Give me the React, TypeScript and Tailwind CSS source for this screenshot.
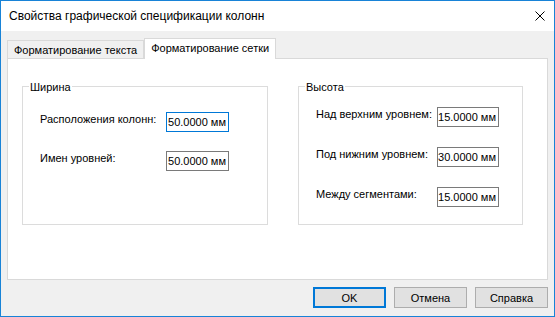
const Field = ({ value, focused, width }: { value: string; focused?: boolean; width: string }) => (
  <div
    className={`${width} h-[20px] flex items-center justify-end pr-[2px] bg-white border whitespace-nowrap ${
      focused ? 'border-[#0078d7]' : 'border-[#7a7a7a]'
    } leading-[18px]`}
  >
    {value}
  </div>
);

const Row = ({ label, labelWidth, children }: { label: string; labelWidth: string; children: React.ReactNode }) => (
  <div className="flex items-start">
    <div className={`${labelWidth} leading-[14px] whitespace-nowrap`}>{label}</div>
    {children}
  </div>
);

const App = () => {
  return (
    <div className="w-[555px] h-[317px] border border-[#1883d7] bg-[#f0f0f0] flex flex-col text-[11px] text-black font-['Liberation_Sans',Arial,sans-serif]">
      {/* title bar */}
      <div className="h-[30px] bg-white flex items-center justify-between pl-[8px] pr-[9px]">
        <span className="leading-[16px] text-[12px]">Свойства графической спецификации колонн</span>
        <svg width="10" height="10" viewBox="0 0 10 10">
          <path d="M0.5 0.5 L9.5 9.5 M9.5 0.5 L0.5 9.5" stroke="#000" strokeWidth="1" />
        </svg>
      </div>

      <div className="flex-1 px-[6px] flex flex-col">
        {/* tabs */}
        <div className="mt-[7px] h-[20px] flex items-end">
          <div className="h-[18px] px-[6px] border border-b-0 border-[#d9d9d9] flex items-center leading-[16px] whitespace-nowrap">
            Форматирование текста
          </div>
          <div className="h-[21px] -mb-px px-[6px] bg-white border border-b-0 border-[#d9d9d9] relative z-10 flex items-center pb-[2px] leading-[16px] whitespace-nowrap">
            Форматирование сетки
          </div>
        </div>

        {/* panel */}
        <div className="h-[222px] bg-white border border-[#d9d9d9] flex items-start pl-[14px] pt-[27px]">
          <div className="relative w-[246px] h-[139px] border border-[#dcdcdc] pl-[17px] pt-[25px]">
            <span className="absolute top-[-8px] left-[6px] bg-white px-[1px] leading-[16px]">Ширина</span>
            <Row label="Расположения колонн:" labelWidth="w-[126px]">
              <Field value="50.0000 мм" focused width="w-[63px]" />
            </Row>
            <div className="mt-[19px]">
              <Row label="Имен уровней:" labelWidth="w-[126px]">
                <Field value="50.0000 мм" width="w-[63px]" />
              </Row>
            </div>
          </div>

          <div className="relative ml-[30px] w-[225px] h-[139px] border border-[#dcdcdc] pl-[17px] pt-[20px] flex flex-col gap-[20px]">
            <span className="absolute top-[-8px] left-[6px] bg-white px-[1px] leading-[16px]">Высота</span>
            <Row label="Над верхним уровнем:" labelWidth="w-[121px]">
              <Field value="15.0000 мм" width="w-[62px]" />
            </Row>
            <Row label="Под нижним уровнем:" labelWidth="w-[121px]">
              <Field value="30.0000 мм" width="w-[62px]" />
            </Row>
            <Row label="Между сегментами:" labelWidth="w-[121px]">
              <Field value="15.0000 мм" width="w-[62px]" />
            </Row>
          </div>
        </div>

        {/* buttons */}
        <div className="mt-[7px] flex justify-end gap-[8px]">
          <button className="w-[73px] h-[21px] bg-[#e1e1e1] border-2 border-[#0078d7] leading-[16px]">OK</button>
          <button className="w-[73px] h-[21px] bg-[#e1e1e1] border border-[#adadad] leading-[16px]">Отмена</button>
          <button className="w-[73px] h-[21px] bg-[#e1e1e1] border border-[#adadad] leading-[16px]">Справка</button>
        </div>
      </div>
    </div>
  );
};

export default App;
